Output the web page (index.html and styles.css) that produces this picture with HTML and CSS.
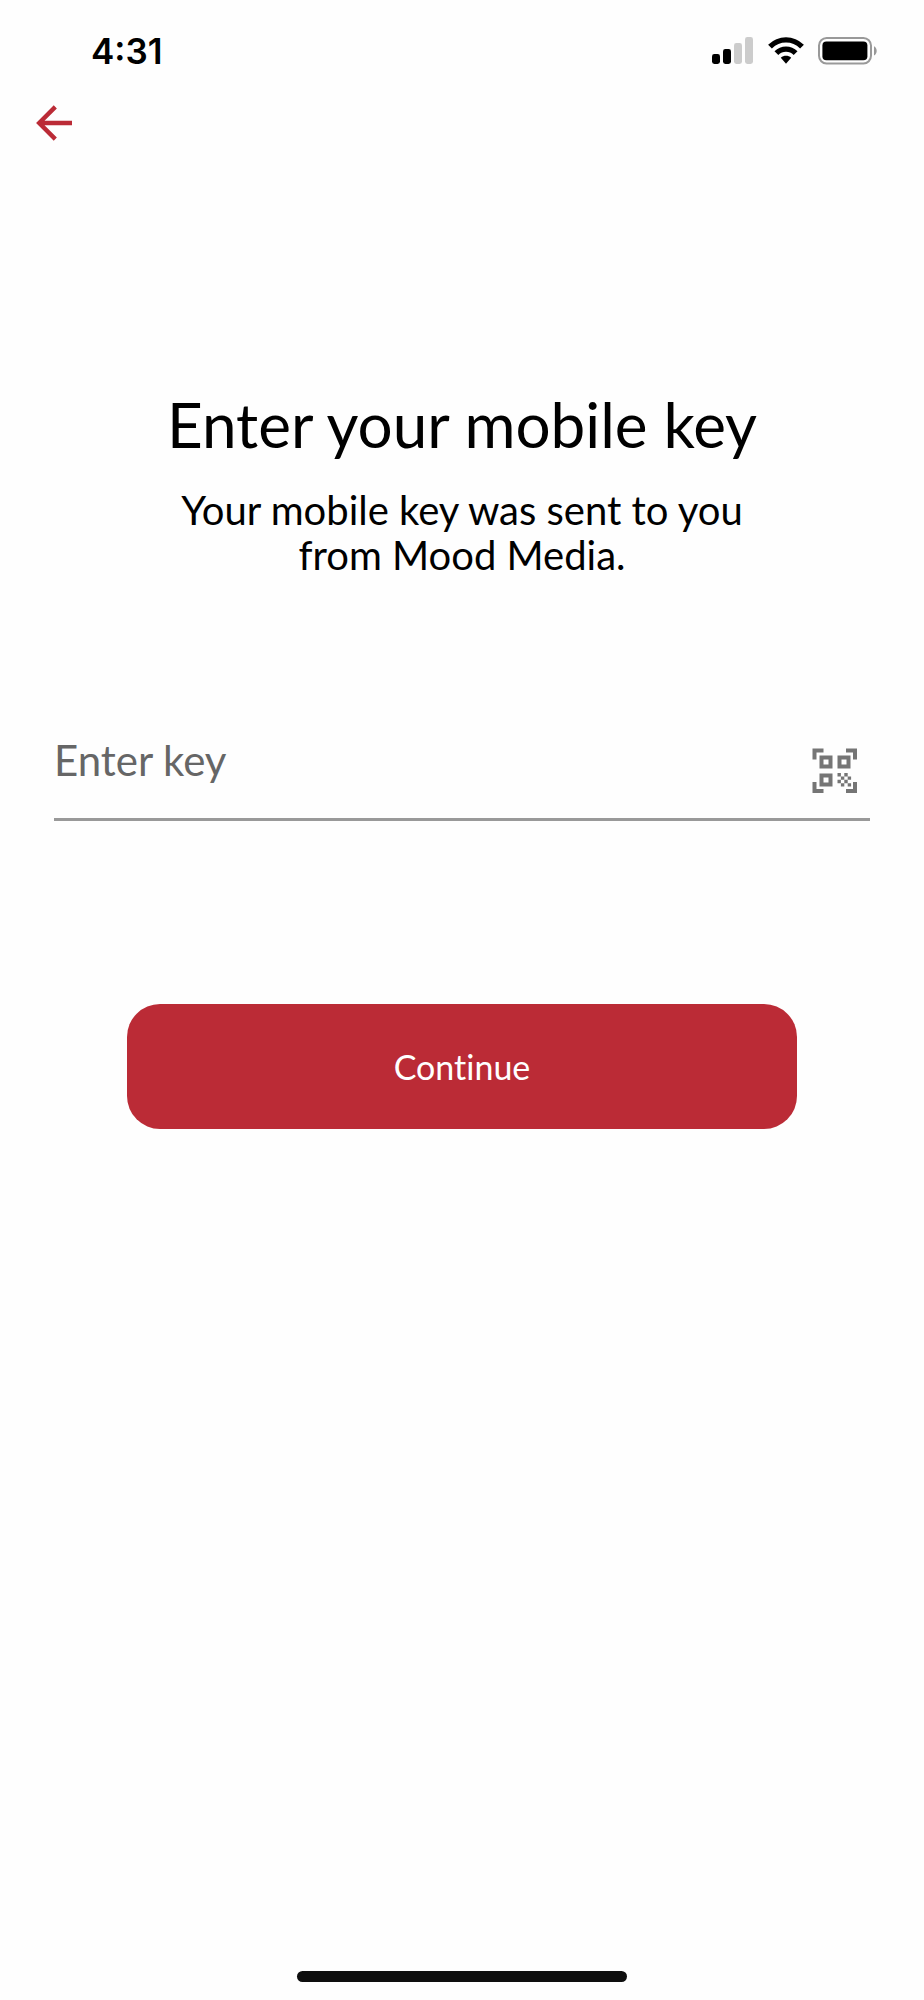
FILE: index.html
```html
<!DOCTYPE html>
<html lang="en">
<head>
<meta charset="utf-8">
<meta name="viewport" content="width=device-width, initial-scale=1">
<title>Enter your mobile key</title>
<link rel="stylesheet" href="styles.css">
</head>
<body>
<div class="screen">
  <header class="status-bar">
    <span class="time">4:31</span>
    <div class="status-icons">
      <svg width="42" height="28" viewBox="0 0 42 28" role="img" aria-label="Signal">
        <rect x="0" y="17" width="8" height="10" rx="2.4"/>
        <rect x="11" y="12" width="8" height="15" rx="2.4"/>
        <rect x="22" y="6" width="8" height="21" rx="2.4" fill="#ccc"/>
        <rect x="33" y="0" width="8" height="27" rx="2.4" fill="#ccc"/>
      </svg>
      <svg width="36" height="28" viewBox="0 0 36 28" role="img" aria-label="Wi-Fi">
        <g fill="none" stroke="#000" stroke-width="5.4">
          <path d="M2 9.6C11.2 .6 24.8 .6 34 9.6"/>
          <path d="M8.4 16.2C13.8 10.8 22.2 10.8 27.6 16.2"/>
        </g>
        <path d="M12.8 20.8C15.8 18.2 20.2 18.2 23.2 20.8L18 26.8Z"/>
      </svg>
      <svg width="60" height="28" viewBox="0 0 60 28" role="img" aria-label="Battery">
        <rect x="1" y="1" width="52" height="25.4" rx="7.6" fill="none" stroke="#999" stroke-width="2"/>
        <rect x="4.4" y="4.4" width="45" height="18.8" rx="4"/>
        <path d="M56 9.2C59.6 10.8 59.6 16.8 56 18.4Z" fill="#999"/>
      </svg>
    </div>
  </header>
  <nav class="nav">
    <button class="back" type="button" aria-label="Back">
      <svg width="36" height="36" viewBox="0 0 36 36" fill="none" stroke="#bb2b36" stroke-width="4.4">
        <path d="M19.3 1.9L3.2 18L19.3 34.1M2.6 18H36"/>
      </svg>
    </button>
  </nav>
  <main class="content">
    <h1 class="title">Enter your mobile key</h1>
    <p class="subtitle">Your mobile key was sent to you<br>from Mood Media.</p>
    <form class="form">
      <div class="field">
        <input class="key-input" type="text" placeholder="Enter key" aria-label="Enter key">
        <button class="scan" type="button" aria-label="Scan QR code">
          <svg width="46" height="46" viewBox="0 0 46 46">
            <g fill="none" stroke="#757575" stroke-width="4">
              <path d="M2.500 11.500V2.500H11.500M34 2.500H43V11.500M43 34V43H34M11.500 43H2.500V34"/>
              <path d="M9.500 9.500H18.500V18.500H9.500ZM27.500 9.500H36.500V18.500H27.500ZM9.500 27.500H18.500V36.500H9.500Z"/>
            </g>
            <path fill="#757575" d="M25.500 25h3.400v3.400h-3.400zM32.300 25h3.400v3.400h-3.400zM28.900 28.400h3.400v3.400h-3.400zM35.700 28.400h3.400v3.400h-3.400zM25.500 31.800h3.400v3.400h-3.400zM32.300 31.800h3.400v3.400h-3.400zM28.900 35.200h3.400v3.400h-3.400zM35.700 35.200h3.400v3.400h-3.400z"/>
          </svg>
        </button>
      </div>
      <button class="continue" type="submit">Continue</button>
    </form>
  </main>
  <footer class="home"><div class="home-bar"></div></footer>
</div>
</body>
</html>
```
FILE: styles.css
```css
* { box-sizing: border-box; }
body {
  margin: 0;
  background: #fefefe;
  color: #000;
  font-family: Lato, "Open Sans", sans-serif;
  font-variant-ligatures: none;
}
button {
  border: 0;
  padding: 0;
  background: none;
  font-family: inherit;
  cursor: pointer;
}
svg { display: block; }
.screen {
  display: flex;
  flex-direction: column;
  min-height: 100vh;
}
.status-bar {
  display: flex;
  justify-content: space-between;
  align-items: center;
  height: 100px;
  padding: 2px 46px 0 91px;
}
.time {
  font: 600 35px/44px Inter, sans-serif;
}
.status-icons {
  display: flex;
  gap: 14px;
}
.nav {
  padding: 5px 36px;
}
.back { display: block; }
.content {
  flex: 1;
  padding: 242px 54px 0;
}
.title {
  margin: 0;
  font-size: 62px;
  font-weight: 400;
  line-height: 72px;
  text-align: center;
}
.subtitle {
  margin: 28px 0 0;
  font-size: 40px;
  line-height: 45px;
  text-align: center;
}
.form {
  display: flex;
  flex-direction: column;
  align-items: center;
  gap: 183px;
  margin-top: 146px;
}
.field {
  display: flex;
  align-items: flex-start;
  width: 100%;
  height: 97px;
  padding-right: 12px;
  border-bottom: 3px solid #999;
}
.key-input {
  flex: 1;
  min-width: 0;
  height: 72px;
  padding: 0;
  border: 0;
  outline: 0;
  background: none;
  color: #000;
  font: 400 42px/48px Lato, "Open Sans", sans-serif;
}
.key-input::placeholder { color: #666; opacity: 1; }
.scan { padding-top: 24px; }
.continue {
  width: 82%;
  height: 125px;
  border-radius: 33px;
  background: #bb2b36;
  color: #fff;
  font-size: 34px;
  font-variant-ligatures: none;
}
.home {
  display: flex;
  justify-content: center;
  padding-bottom: 18px;
}
.home-bar {
  width: 330px;
  height: 11px;
  border-radius: 6px;
  background: #0e0e0e;
}
```
